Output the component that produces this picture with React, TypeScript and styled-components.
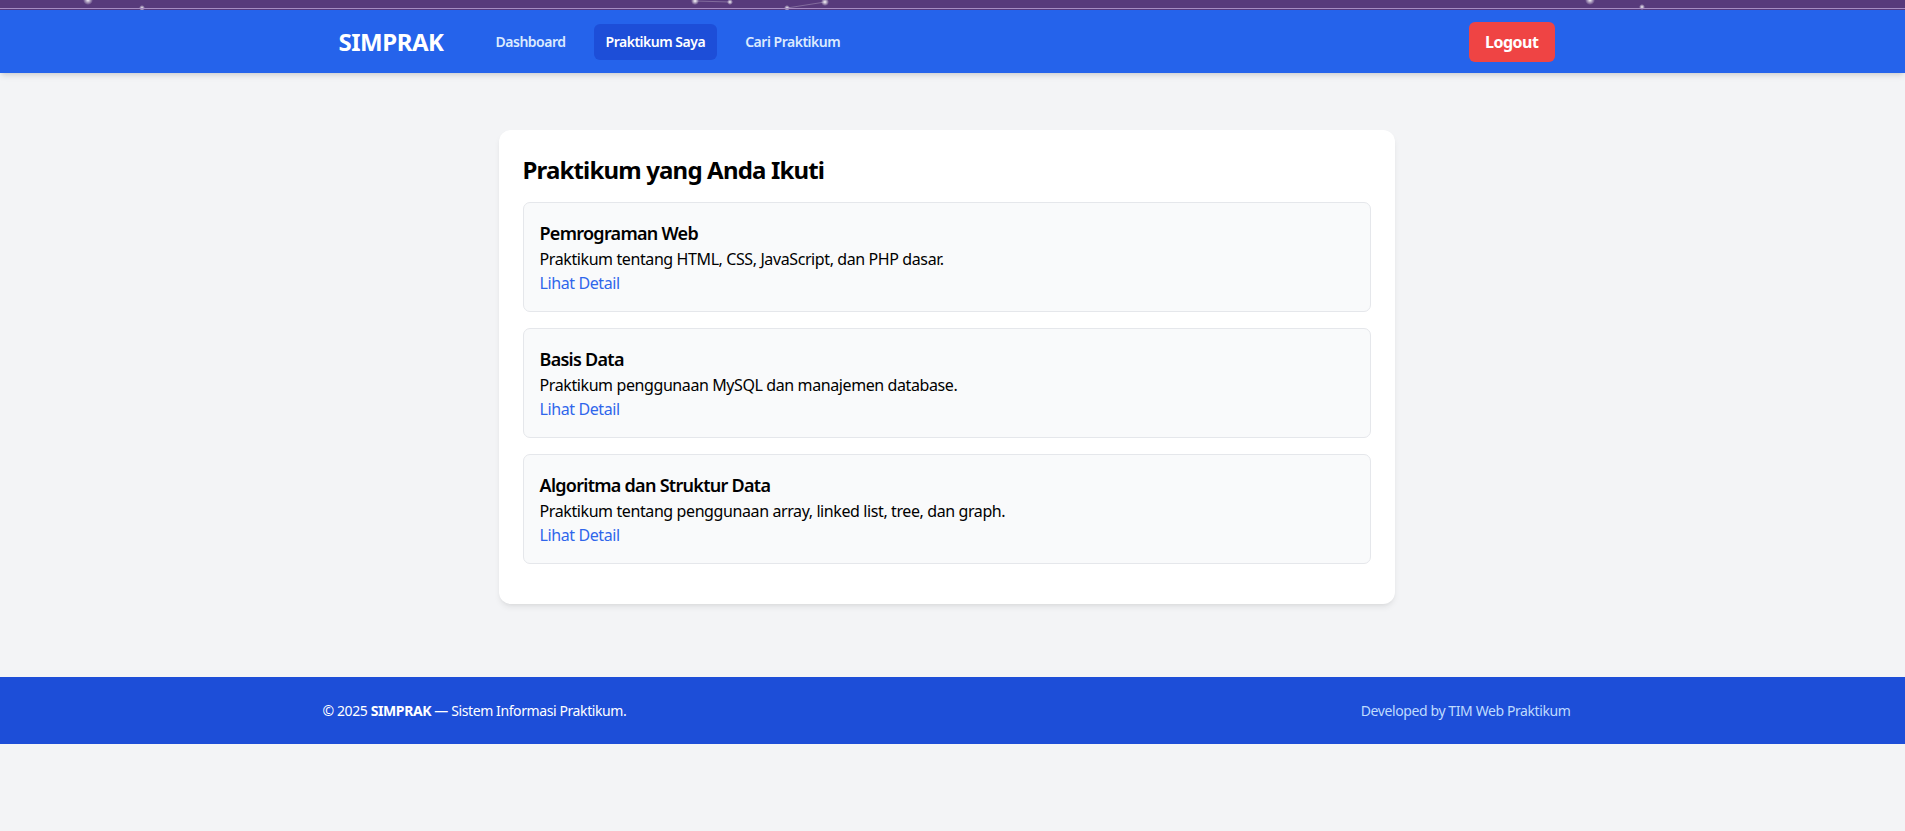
import React from "react";
import styled, { createGlobalStyle } from "styled-components";

const Global = createGlobalStyle`
  html, body { margin: 0; padding: 0; }
  body {
    background: #f3f4f6;
    font-family: "Noto Sans", "Open Sans", Arial, sans-serif;
    color: #111827;
    letter-spacing: -0.025em;
  }
  * { box-sizing: border-box; }
`;

const Strip = styled.div`
  height: 10px;
  background: #573a7b;
  position: relative;
  overflow: hidden;
  &::after {
    content: "";
    position: absolute;
    left: 0;
    right: 0;
    top: 8px;
    height: 1px;
    background: #a58cc2;
  }
`;

const Glows = styled.svg`
  position: absolute;
  inset: 0;
  width: 100%;
  height: 10px;
`;

const NavBar = styled.nav`
  background: #2563eb;
  height: 63px;
  box-shadow: 0 4px 6px -1px rgba(0, 0, 0, 0.1), 0 2px 4px -2px rgba(0, 0, 0, 0.1);
  position: relative;
  z-index: 1;
`;

const Shell = styled.div<{ $pad: number }>`
  max-width: 1280px;
  margin: 0 auto;
  padding: 0 ${(p) => p.$pad}px;
  position: relative;
  left: -6px;
`;

const NavInner = styled(Shell)`
  height: 100%;
  display: flex;
  align-items: center;
  justify-content: space-between;
`;

const NavLeft = styled.div`
  display: flex;
  align-items: center;
`;

const Brand = styled.span`
  color: #ffffff;
  font-size: 24px;
  font-weight: 700;
  line-height: 32px;
  letter-spacing: -0.02em;
  margin-right: 40px;
`;

const Links = styled.div`
  display: flex;
  gap: 16px;
`;

const NavLink = styled.a<{ $active?: boolean }>`
  display: block;
  padding: 8px 12px;
  border-radius: 6px;
  font-size: 14px;
  line-height: 20px;
  font-weight: 600;
  letter-spacing: -0.035em;
  text-decoration: none;
  color: ${(p) => (p.$active ? "#ffffff" : "#dbeafe")};
  background: ${(p) => (p.$active ? "#1d4ed8" : "transparent")};
`;

const LogoutButton = styled.button`
  background: #ef4444;
  color: #ffffff;
  border: none;
  border-radius: 6px;
  height: 40px;
  padding: 0 16px;
  font-family: inherit;
  font-size: 16px;
  font-weight: 700;
  letter-spacing: -0.03em;
  cursor: pointer;
`;

const Main = styled.main`
  padding: 57px 16px 73px;
`;

const Card = styled.section`
  max-width: 896px;
  margin: 0 auto;
  position: relative;
  left: -6px;
  background: #ffffff;
  border-radius: 12px;
  box-shadow: 0 4px 6px -1px rgba(0, 0, 0, 0.08), 0 2px 4px -2px rgba(0, 0, 0, 0.06);
  padding: 24px 24px 24px;
`;

const Heading = styled.h2`
  margin: 0 0 16px;
  font-size: 24px;
  line-height: 32px;
  font-weight: 700;
  letter-spacing: -0.035em;
  color: #000000;
`;

const Item = styled.div`
  background: #f9fafb;
  border: 1px solid #e5e7eb;
  border-radius: 7px;
  padding: 16px;
  margin-bottom: 16px;
`;

const ItemTitle = styled.h3`
  margin: 0;
  font-size: 18px;
  line-height: 28px;
  font-weight: 600;
  letter-spacing: -0.04em;
  color: #000000;
`;

const ItemDesc = styled.p`
  margin: 0;
  font-size: 16px;
  line-height: 24px;
  color: #000000;
`;

const DetailLink = styled.a`
  display: inline-block;
  font-size: 16px;
  line-height: 24px;
  color: #2f66eb;
  text-decoration: none;
`;

const Footer = styled.footer`
  background: #1d4ed8;
  padding: 24px 0;
`;

const FooterInner = styled(Shell)`
  display: flex;
  justify-content: space-between;
  align-items: center;
  font-size: 14px;
  line-height: 19px;
`;

const FooterLeft = styled.span`
  color: #ffffff;
  strong { font-weight: 700; }
`;

const FooterRight = styled.span`
  color: #bfdbfe;
`;

const praktikum = [
  {
    title: "Pemrograman Web",
    desc: "Praktikum tentang HTML, CSS, JavaScript, dan PHP dasar.",
  },
  {
    title: "Basis Data",
    desc: "Praktikum penggunaan MySQL dan manajemen database.",
  },
  {
    title: "Algoritma dan Struktur Data",
    desc: "Praktikum tentang penggunaan array, linked list, tree, dan graph.",
  },
];

const glows = [
  { x: 88, y: 0, r: 5 },
  { x: 142, y: 8, r: 3 },
  { x: 695, y: 1, r: 4 },
  { x: 730, y: 2, r: 3 },
  { x: 787, y: 8, r: 3 },
  { x: 825, y: 2, r: 4 },
  { x: 1590, y: 0, r: 5 },
  { x: 1642, y: 7, r: 3 },
];

export default function App() {
  return (
    <>
      <Global />
      <Strip>
        <Glows>
          <defs>
            <radialGradient id="g">
              <stop offset="0%" stopColor="#ffffff" stopOpacity="0.95" />
              <stop offset="100%" stopColor="#ffffff" stopOpacity="0" />
            </radialGradient>
          </defs>
          <line x1="695" y1="1" x2="730" y2="2" stroke="#ffffff" strokeOpacity="0.25" />
          <line x1="787" y1="8" x2="825" y2="2" stroke="#ffffff" strokeOpacity="0.25" />
          {glows.map((g, i) => (
            <circle key={i} cx={g.x} cy={g.y} r={g.r} fill="url(#g)" />
          ))}
        </Glows>
      </Strip>
      <NavBar>
        <NavInner $pad={32}>
          <NavLeft>
            <Brand>SIMPRAK</Brand>
            <Links>
              <NavLink href="#">Dashboard</NavLink>
              <NavLink href="#" $active>
                Praktikum Saya
              </NavLink>
              <NavLink href="#">Cari Praktikum</NavLink>
            </Links>
          </NavLeft>
          <LogoutButton>Logout</LogoutButton>
        </NavInner>
      </NavBar>
      <Main>
        <Card>
          <Heading>Praktikum yang Anda Ikuti</Heading>
          {praktikum.map((p) => (
            <Item key={p.title}>
              <ItemTitle>{p.title}</ItemTitle>
              <ItemDesc>{p.desc}</ItemDesc>
              <DetailLink href="#">Lihat Detail</DetailLink>
            </Item>
          ))}
        </Card>
      </Main>
      <Footer>
        <FooterInner $pad={16}>
          <FooterLeft>
            © 2025 <strong>SIMPRAK</strong> — Sistem Informasi Praktikum.
          </FooterLeft>
          <FooterRight>Developed by TIM Web Praktikum</FooterRight>
        </FooterInner>
      </Footer>
    </>
  );
}
